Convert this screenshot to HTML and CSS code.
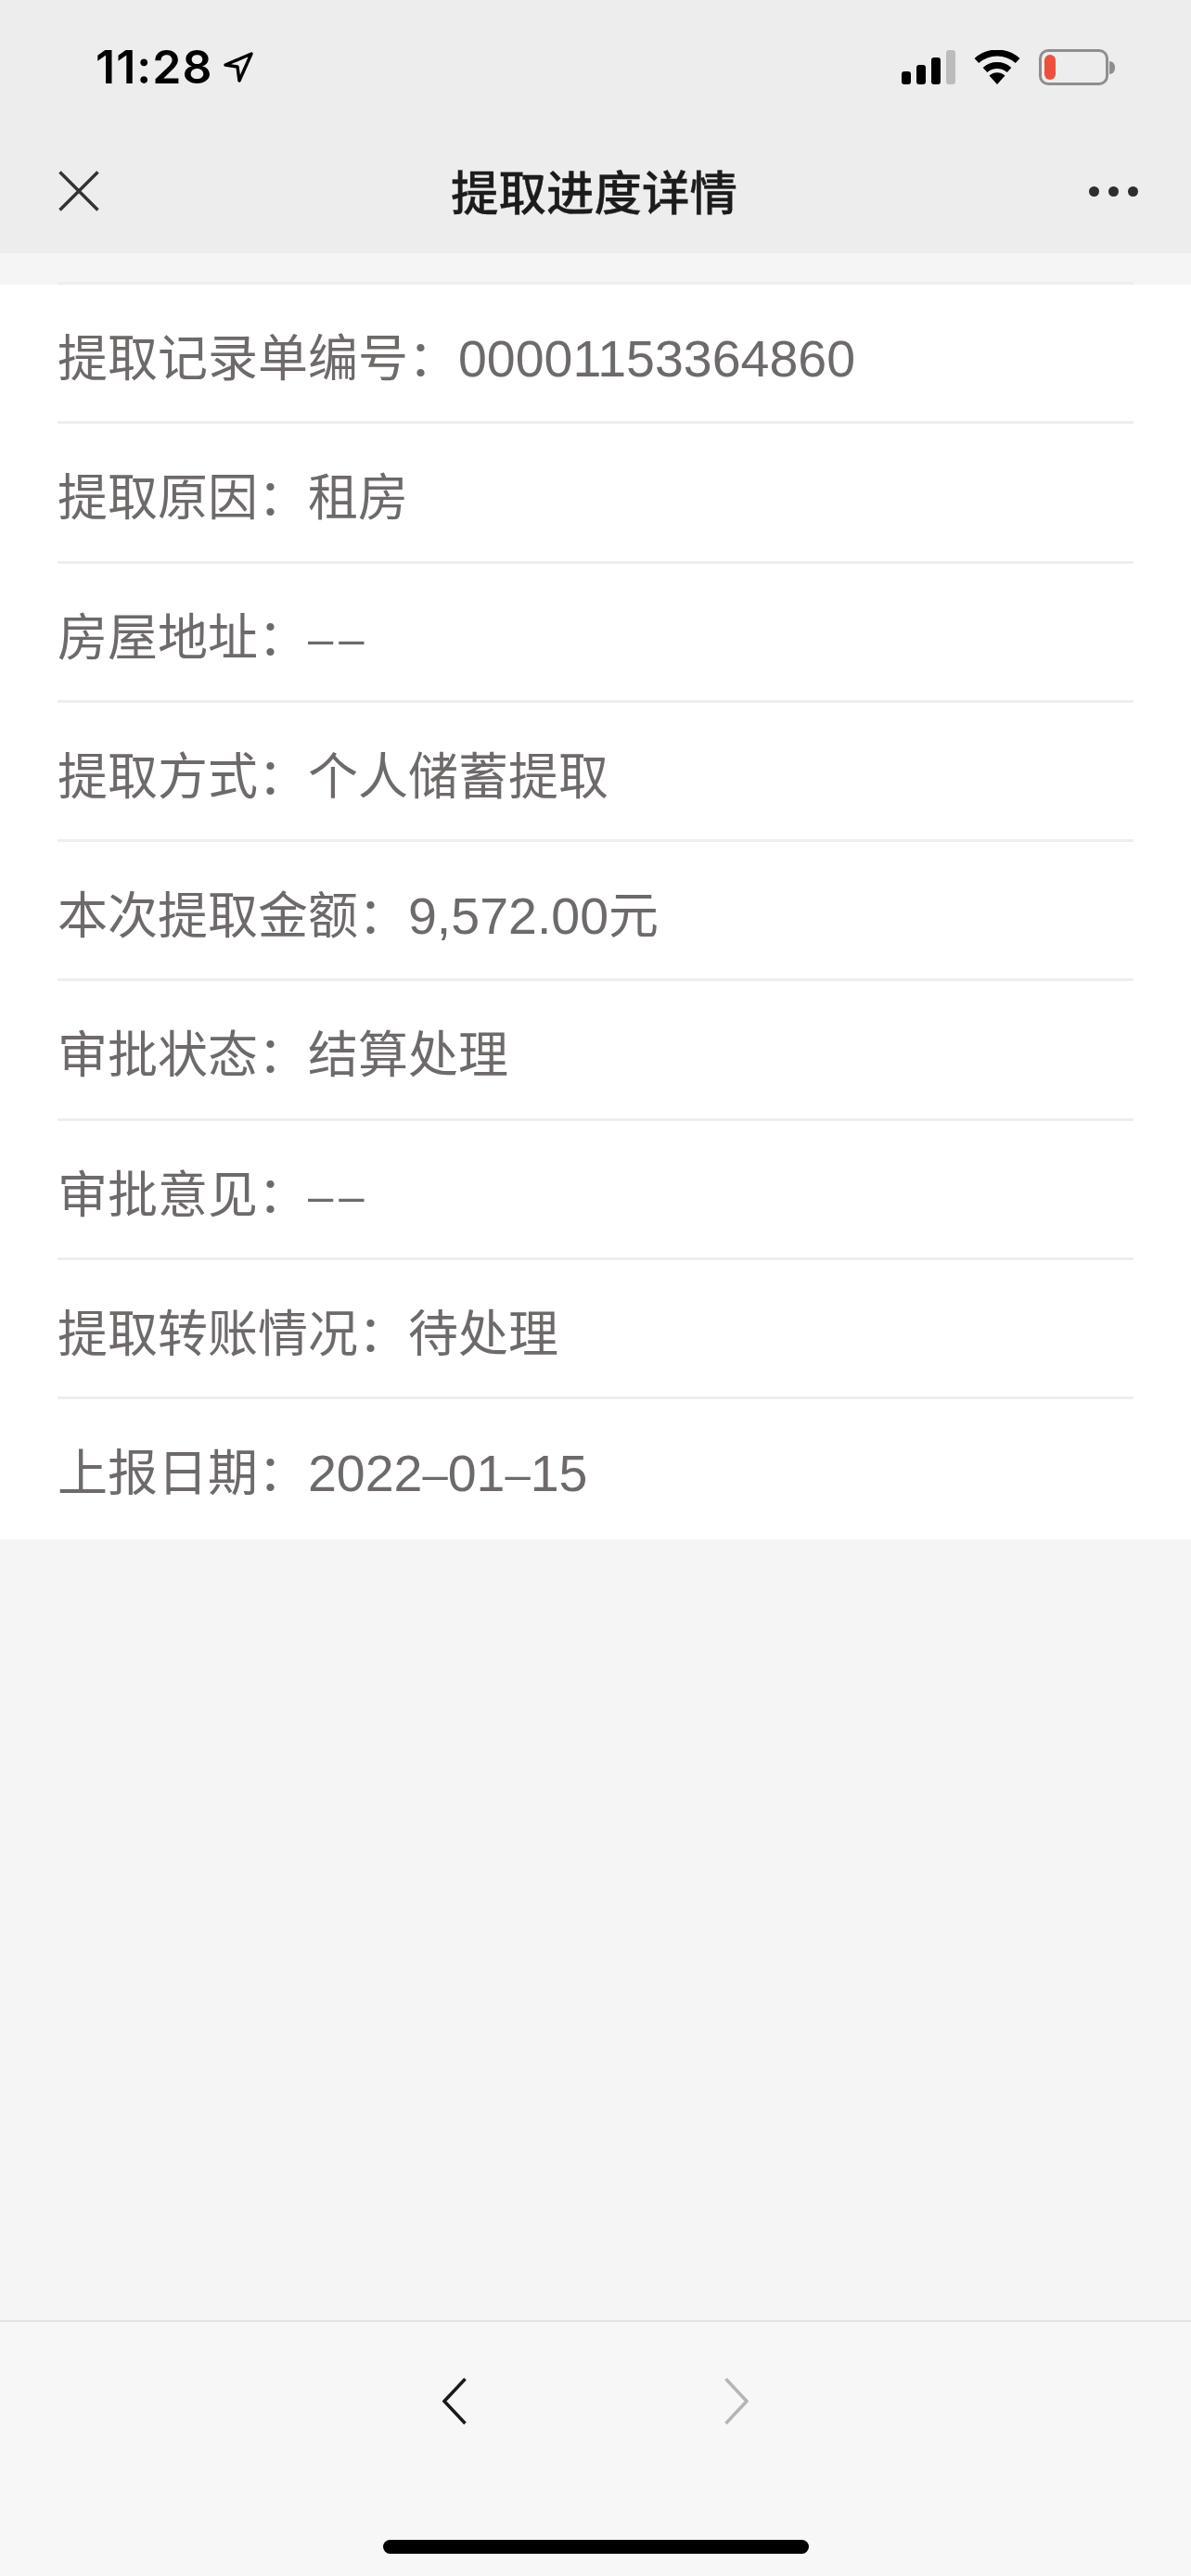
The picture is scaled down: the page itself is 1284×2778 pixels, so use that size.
FILE: index.html
```html
<!DOCTYPE html>
<html lang="zh-CN">
<head>
    <meta charset="UTF-8">
    <meta name="viewport" content="width=device-width, initial-scale=1.0">
    <title>提取进度详情</title>
    <link rel="stylesheet" href="styles.css">
</head>
<body>

<header class="top">
    <div class="status">
        <div class="clock">
            <span class="time">11:28</span>
            <svg class="arrow" width="32" height="33" viewBox="0 0 32 33"><path d="M2 14 30 2 17 31 15 16Z" fill="none" stroke="#000" stroke-width="3.4" stroke-linejoin="round"/></svg>
        </div>
        <div class="indicators">
            <svg class="signal" width="58" height="37" viewBox="0 0 58 37">
                <rect x="0" y="23" width="10" height="14" rx="3" fill="#000"/>
                <rect x="16" y="16" width="10" height="21" rx="3" fill="#000"/>
                <rect x="32" y="8" width="10" height="29" rx="3" fill="#000"/>
                <rect x="48" y="0" width="10" height="37" rx="3" fill="#bcbcbc"/>
            </svg>
            <svg class="wifi" width="50" height="37" viewBox="0 0 50 37">
                <path d="M2.9 11.5A33 33 0 0 1 47.1 11.5" fill="none" stroke="#000" stroke-width="7"/>
                <path d="M12 21.5A19.5 19.5 0 0 1 38 21.5" fill="none" stroke="#000" stroke-width="7"/>
                <path d="M25 37 16.5 27.5A12.5 12.5 0 0 1 33.5 27.5Z" fill="#000"/>
            </svg>
            <div class="battery">
                <div class="battery-body"><div class="battery-level"></div></div>
                <div class="battery-cap"></div>
            </div>
        </div>
    </div>
    <nav class="navbar">
        <svg class="close" width="44" height="44" viewBox="0 0 44 44"><path d="M1.5 1.5 42.5 42.5M42.5 1.5 1.5 42.5" stroke="#333" stroke-width="3.5"/></svg>
        <h1 class="title">提取进度详情</h1>
        <div class="more"><span></span><span></span><span></span></div>
    </nav>
</header>

<main class="content">
    <ul class="detail-list">
        <li class="detail-row">提取记录单编号：<span class="num">00001153364860</span></li>
        <li class="detail-row">提取原因：租房</li>
        <li class="detail-row">房屋地址：<span class="num empty"><span class="dash">–</span><span class="dash">–</span></span></li>
        <li class="detail-row">提取方式：个人储蓄提取</li>
        <li class="detail-row">本次提取金额：<span class="num">9,572.00</span>元</li>
        <li class="detail-row">审批状态：结算处理</li>
        <li class="detail-row">审批意见：<span class="num empty"><span class="dash">–</span><span class="dash">–</span></span></li>
        <li class="detail-row">提取转账情况：待处理</li>
        <li class="detail-row">上报日期：<span class="num">2022<span class="dash">–</span>01<span class="dash">–</span>15</span></li>
    </ul>
</main>

<footer class="toolbar">
    <div class="toolbar-buttons">
        <svg width="26" height="51" viewBox="0 0 26 51"><path d="M24.5 1.5 2 25.5 24.5 49.5" fill="none" stroke="#1a1a1a" stroke-width="3.5"/></svg>
        <svg width="26" height="51" viewBox="0 0 26 51"><path d="M1.5 1.5 24 25.5 1.5 49.5" fill="none" stroke="#b5b5b5" stroke-width="3.5"/></svg>
    </div>
    <div class="home-bar"></div>
</footer>

</body>
</html>
```

FILE: styles.css
```css
* {
    box-sizing: border-box;
}
html, body {
    margin: 0;
    padding: 0;
}
body {
    width: 1284px;
    height: 2778px;
    display: flex;
    flex-direction: column;
    overflow: hidden;
    background-color: #f4f4f4;
    font-family: "Liberation Sans", "Noto Sans CJK SC", sans-serif;
}

.top {
    background-color: #ededed;
    height: 273px;
}
.status {
    height: 153px;
    padding: 54px 82px 0 103px;
    display: flex;
    justify-content: space-between;
    align-items: flex-start;
}
.clock {
    display: flex;
    align-items: flex-start;
    gap: 12px;
}
.time {
    font-family: Inter, sans-serif;
    font-size: 50px;
    font-weight: 600;
    line-height: 37px;
    color: #000;
    letter-spacing: 1px;
}
.arrow {
    margin-top: 2px;
}
.indicators {
    display: flex;
    align-items: flex-start;
    gap: 20px;
}
.battery {
    display: flex;
    align-items: center;
    margin-top: -1px;
}
.battery-body {
    width: 75px;
    height: 39px;
    border: 3px solid #8e8e8e;
    border-radius: 10px;
    padding: 3px;
}
.battery-level {
    width: 12px;
    height: 27px;
    border-radius: 6px;
    background-color: #ee4f3d;
}
.battery-cap {
    width: 6px;
    height: 14px;
    margin-left: 1px;
    background-color: #8e8e8e;
    border-radius: 0 7px 7px 0;
}

.navbar {
    height: 120px;
    padding: 0 57px 0 63px;
    display: flex;
    justify-content: space-between;
    align-items: center;
}
.close {
    margin-top: -14px;
}
.title {
    margin: -17px 0 0;
    font-size: 51.5px;
    font-weight: 500;
    color: #1c1c1c;
    -webkit-text-stroke: 0.3px #1c1c1c;
}
.more {
    display: flex;
    gap: 10px;
    margin-top: -14px;
}
.more span {
    width: 11px;
    height: 11px;
    border-radius: 50%;
    background-color: #2e2e2e;
}

.content {
    flex: 1;
    padding-top: 34px;
    background-color: #f5f5f5;
}
.detail-list {
    display: flow-root;
    list-style: none;
    margin: 0;
    padding: 0 62px;
    background-color: #fff;
}
.detail-row {
    height: 150.25px;
    padding-top: 40px;
    border-top: 3px solid #eeeeee;
    font-size: 54px;
    line-height: 80px;
    color: #6e6a6a;
}
.detail-row:first-child {
    margin-top: -3px;
}
.detail-row:last-child {
    height: 154px;
}
.num {
    font-size: 55.5px;
}
.dash {
    font-size: 49px;
    vertical-align: 1px;
}
.empty .dash {
    letter-spacing: 6px;
}

.toolbar {
    height: 276px;
    padding-top: 60px;
    border-top: 2px solid #e3e3e3;
    background-color: #f7f7f7;
}
.toolbar-buttons {
    display: flex;
    justify-content: center;
    gap: 278px;
}
.home-bar {
    width: 459px;
    height: 15px;
    margin: 124px 0 0 413px;
    border-radius: 8px;
    background-color: #000;
}
```
